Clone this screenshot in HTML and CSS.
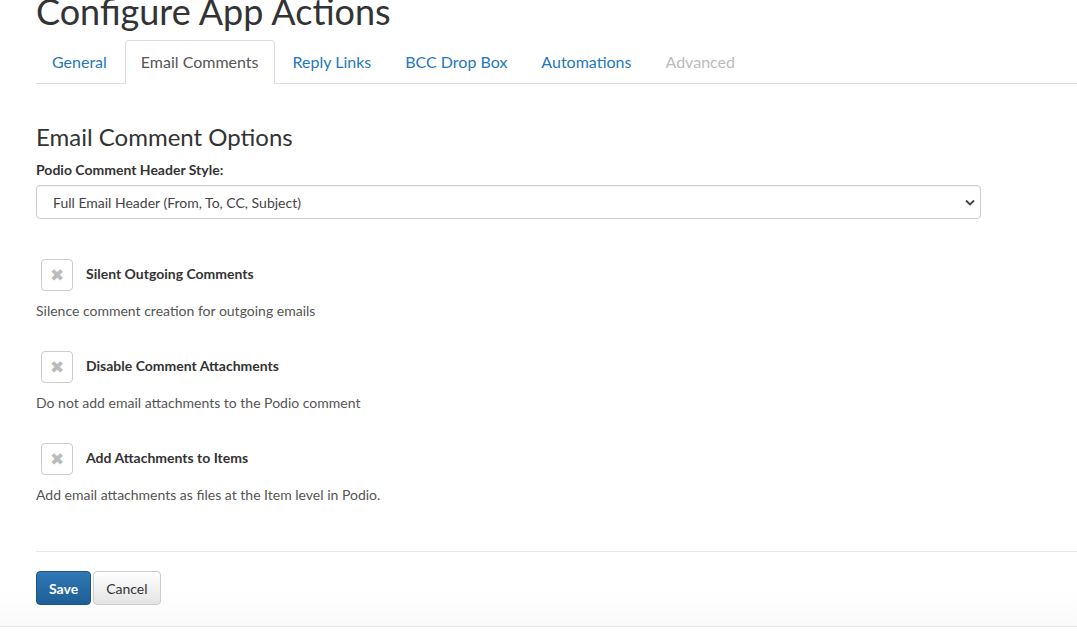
FILE: index.html
```html
<!DOCTYPE html>
<html lang="en">
<head>
    <meta charset="UTF-8" />
    <title>Configure App Actions</title>
    <link rel="stylesheet" href="styles.css">
</head>
<body>
    <div class="page">
        <div class="content">
            <h1 class="title">Configure App Actions</h1>

            <ul class="tabs">
                <li><a href="#">General</a></li>
                <li class="active"><a href="#">Email Comments</a></li>
                <li><a href="#">Reply Links</a></li>
                <li><a href="#">BCC Drop Box</a></li>
                <li><a href="#">Automations</a></li>
                <li class="disabled"><a href="#">Advanced</a></li>
            </ul>

            <form class="options">
                <h2>Email Comment Options</h2>

                <label class="field-label" for="headerStyle">Podio Comment Header Style:</label>
                <div class="select-wrap">
                    <select id="headerStyle" name="headerStyle">
                        <option>Full Email Header (From, To, CC, Subject)</option>
                        <option>Short Email Header (From, Subject)</option>
                        <option>No Header</option>
                    </select>
                    <svg class="chevron" width="10" height="7" viewBox="0 0 10 7">
                        <path d="M1 1.5 L5 5.5 L9 1.5" fill="none" stroke="#444" stroke-width="1.8"/>
                    </svg>
                </div>

                <div class="toggle">
                    <div class="toggle-row">
                        <span class="toggle-box">&#10006;</span>
                        <span class="toggle-label">Silent Outgoing Comments</span>
                    </div>
                    <p class="help">Silence comment creation for outgoing emails</p>
                </div>

                <div class="toggle">
                    <div class="toggle-row">
                        <span class="toggle-box">&#10006;</span>
                        <span class="toggle-label">Disable Comment Attachments</span>
                    </div>
                    <p class="help">Do not add email attachments to the Podio comment</p>
                </div>

                <div class="toggle">
                    <div class="toggle-row">
                        <span class="toggle-box">&#10006;</span>
                        <span class="toggle-label">Add Attachments to Items</span>
                    </div>
                    <p class="help">Add email attachments as files at the Item level in Podio.</p>
                </div>

                <div class="actions">
                    <button type="submit" class="btn btn-primary">Save</button>
                    <button type="button" class="btn btn-default">Cancel</button>
                </div>
            </form>
        </div>
    </div>
</body>
</html>
```

FILE: styles.css
```css
body {
    margin: 0;
    padding: 0;
    font-family: Lato, "Open Sans", Arial, sans-serif;
    color: #333;
    background: #fff;
    overflow: hidden;
}

.page {
    display: flow-root;
    padding-left: 20px;
    background: linear-gradient(to bottom, #fff 0, #fff 590px, #fafafa 626px);
    border-bottom: 1px solid #e6e6e6;
    height: 626px;
}

.content {
    padding-left: 16px;
}

.title {
    margin: -9px 0 0 0;
    font-size: 36px;
    font-weight: 400;
    line-height: 40px;
    color: #333;
}

/* tabs */
.tabs {
    list-style: none;
    margin: 9px 0 0 0;
    padding: 0;
    display: flex;
    border-bottom: 1px solid #ddd;
}

.tabs li {
    margin-right: 2px;
    margin-bottom: -1px;
}

.tabs a {
    display: block;
    padding: 11px 15px;
    font-size: 16px;
    line-height: 20px;
    color: #1f77be;
    text-decoration: none;
    border: 1px solid transparent;
    border-radius: 4px 4px 0 0;
}

.tabs .active a {
    color: #555;
    border-color: #ddd #ddd transparent #ddd;
    background: #fff;
}

.tabs .disabled a {
    color: #bbb;
}

/* form */
.options h2 {
    margin: 38px 0 0 0;
    font-size: 24px;
    font-weight: 400;
    line-height: 30px;
}

.field-label {
    display: block;
    margin-top: 8px;
    font-size: 14px;
    font-weight: 700;
    line-height: 20px;
}

.select-wrap {
    position: relative;
    width: 945px;
    margin-top: 5px;
}

.select-wrap select {
    appearance: none;
    -webkit-appearance: none;
    display: block;
    width: 100%;
    height: 34px;
    padding: 0 30px 0 16px;
    font-family: Lato, "Open Sans", Arial, sans-serif;
    font-size: 14px;
    color: #444;
    background: #fff;
    border: 1px solid #ccc;
    border-radius: 4px;
    box-shadow: inset 0 1px 1px rgba(0, 0, 0, 0.04);
}

.chevron {
    position: absolute;
    right: 6px;
    top: 14px;
    pointer-events: none;
}

.toggle {
    margin-top: 40px;
}

.toggle + .toggle {
    margin-top: 31px;
}

.toggle-row {
    display: flex;
    align-items: center;
    padding-left: 5px;
}

.toggle-box {
    width: 30px;
    height: 30px;
    border: 1px solid #ccc;
    border-radius: 4px;
    display: flex;
    align-items: center;
    justify-content: center;
    color: #bbb;
    font-size: 17px;
    font-family: "DejaVu Sans", sans-serif;
}

.toggle-label {
    margin-left: 13px;
    margin-bottom: 3px;
    font-size: 14px;
    font-weight: 700;
}

.help {
    margin: 11px 0 0 0;
    font-size: 14px;
    line-height: 18px;
    color: #555;
}

.actions {
    margin-top: 47px;
    padding-top: 19px;
    border-top: 1px solid #e8e8e8;
    display: flex;
    gap: 2px;
}

.btn {
    height: 34px;
    padding: 0 12px;
    font-family: Lato, "Open Sans", Arial, sans-serif;
    font-size: 14px;
    border-radius: 4px;
    cursor: pointer;
}

.btn-primary {
    color: #fff;
    font-weight: 700;
    background: linear-gradient(to bottom, #2f78b5 0, #1f5e96 100%);
    border: 1px solid #1c5487;
}

.btn-default {
    color: #333;
    background: linear-gradient(to bottom, #fff 0, #e4e4e4 100%);
    border: 1px solid #ccc;
}
```
